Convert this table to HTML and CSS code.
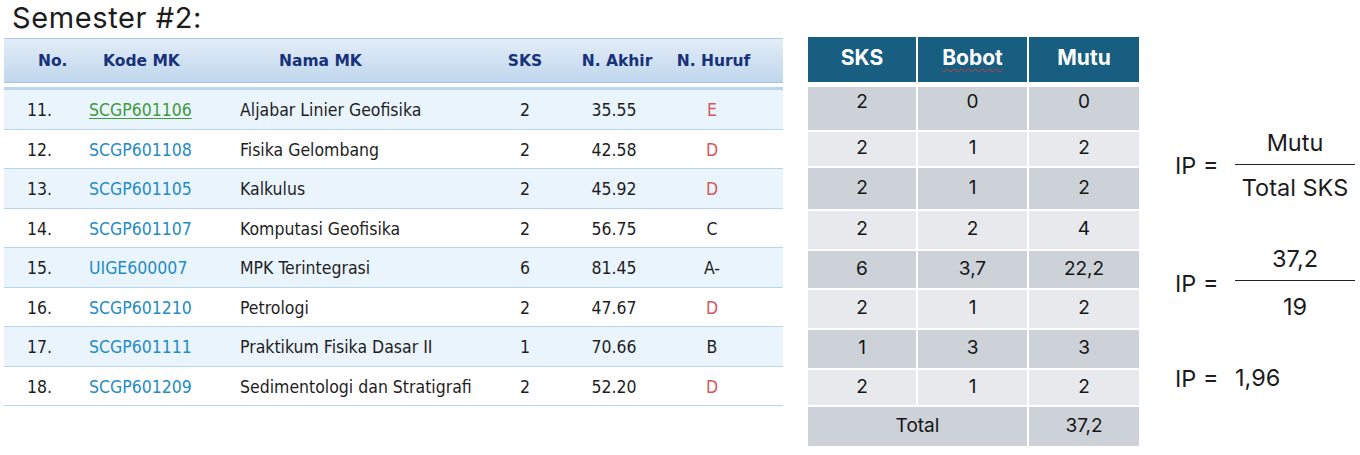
FILE: index.html
```html
<!DOCTYPE html>
<html lang="id">
<head>
<meta charset="utf-8">
<title>Semester #2</title>
<link rel="stylesheet" href="styles.css">
</head>
<body>
<div class="title">Semester #2:</div>
<div class="main">
  <table class="grades">
    <colgroup>
      <col class="w-no"><col class="w-kode"><col class="w-nama"><col class="w-sks"><col class="w-akhir"><col class="w-huruf">
    </colgroup>
    <thead>
      <tr>
        <th class="h-no">No.</th>
        <th class="h-kode">Kode MK</th>
        <th class="h-nama">Nama MK</th>
        <th class="h-center">SKS</th>
        <th class="h-center h-akhir">N. Akhir</th>
        <th class="h-huruf">N. Huruf</th>
      </tr>
    </thead>
    <tbody>
      <tr class="spacer"><td colspan="6"></td></tr>
      <tr class="alt first">
        <td class="d-no">11.</td><td class="d-kode"><a class="visited">SCGP601106</a></td><td class="d-nama">Aljabar Linier Geofisika</td><td class="d-center">2</td><td class="d-center">35.55</td><td class="d-huruf bad">E</td>
      </tr>
      <tr>
        <td class="d-no">12.</td><td class="d-kode"><a>SCGP601108</a></td><td class="d-nama">Fisika Gelombang</td><td class="d-center">2</td><td class="d-center">42.58</td><td class="d-huruf bad">D</td>
      </tr>
      <tr class="alt">
        <td class="d-no">13.</td><td class="d-kode"><a>SCGP601105</a></td><td class="d-nama">Kalkulus</td><td class="d-center">2</td><td class="d-center">45.92</td><td class="d-huruf bad">D</td>
      </tr>
      <tr>
        <td class="d-no">14.</td><td class="d-kode"><a>SCGP601107</a></td><td class="d-nama">Komputasi Geofisika</td><td class="d-center">2</td><td class="d-center">56.75</td><td class="d-huruf">C</td>
      </tr>
      <tr class="alt">
        <td class="d-no">15.</td><td class="d-kode"><a>UIGE600007</a></td><td class="d-nama">MPK Terintegrasi</td><td class="d-center">6</td><td class="d-center">81.45</td><td class="d-huruf">A-</td>
      </tr>
      <tr>
        <td class="d-no">16.</td><td class="d-kode"><a>SCGP601210</a></td><td class="d-nama">Petrologi</td><td class="d-center">2</td><td class="d-center">47.67</td><td class="d-huruf bad">D</td>
      </tr>
      <tr class="alt">
        <td class="d-no">17.</td><td class="d-kode"><a>SCGP601111</a></td><td class="d-nama">Praktikum Fisika Dasar II</td><td class="d-center">1</td><td class="d-center">70.66</td><td class="d-huruf">B</td>
      </tr>
      <tr>
        <td class="d-no">18.</td><td class="d-kode"><a>SCGP601209</a></td><td class="d-nama">Sedimentologi dan Stratigrafi</td><td class="d-center">2</td><td class="d-center">52.20</td><td class="d-huruf bad">D</td>
      </tr>
    </tbody>
  </table>

  <div class="bobot">
    <div class="bh">SKS</div><div class="bh"><span class="spell">Bobot</span></div><div class="bh">Mutu</div>
    <div class="bc dark top">2</div><div class="bc dark top">0</div><div class="bc dark top">0</div>
    <div class="bc light">2</div><div class="bc light">1</div><div class="bc light">2</div>
    <div class="bc dark">2</div><div class="bc dark">1</div><div class="bc dark">2</div>
    <div class="bc light">2</div><div class="bc light">2</div><div class="bc light">4</div>
    <div class="bc dark">6</div><div class="bc dark">3,7</div><div class="bc dark">22,2</div>
    <div class="bc light">2</div><div class="bc light">1</div><div class="bc light">2</div>
    <div class="bc dark">1</div><div class="bc dark">3</div><div class="bc dark">3</div>
    <div class="bc light">2</div><div class="bc light">1</div><div class="bc light">2</div>
    <div class="bc dark span2">Total</div><div class="bc dark">37,2</div>
  </div>

  <div class="formulas">
    <div class="formula">
      <span class="ip">IP =</span>
      <span class="frac"><span class="num">Mutu</span><span class="den">Total SKS</span></span>
    </div>
    <div class="formula f2">
      <span class="ip">IP =</span>
      <span class="frac"><span class="num">37,2</span><span class="den">19</span></span>
    </div>
    <div class="formula f3">
      <span class="ip">IP =</span>
      <span class="val">1,96</span>
    </div>
  </div>
</div>
</body>
</html>
```

FILE: styles.css
```css
html, body {
  margin: 0;
  padding: 0;
  background: #ffffff;
}
body {
  width: 1360px;
  height: 455px;
  overflow: hidden;
  font-family: "Inter", "Liberation Sans", sans-serif;
  color: #1a1a1a;
}
.title {
  height: 37px;
  line-height: 35px;
  padding-left: 12px;
  font-size: 29px;
  letter-spacing: 0.6px;
  color: #1c1c1c;
}
.main {
  display: flex;
  align-items: flex-start;
}

/* ---- grades table ---- */
.grades {
  margin-left: 4px;
  margin-top: 1px;
  width: 779px;
  table-layout: fixed;
  border-collapse: separate;
  border-spacing: 0;
  font-family: "DejaVu Sans Condensed", "DejaVu Sans", sans-serif;
  font-stretch: condensed;
  font-size: 17.5px;
}
.w-no { width: 72px; }
.w-kode { width: 152px; }
.w-nama { width: 262px; }
.w-sks { width: 70px; }
.w-akhir { width: 108px; }
.w-huruf { width: 115px; }

.grades thead th {
  height: 43px;
  padding: 0;
  border-top: 1px solid #a9cbea;
  border-bottom: 1px solid #a7c6e4;
  background: linear-gradient(#e2edf8, #c0d6ec);
  font-family: "DejaVu Sans", sans-serif;
  font-stretch: normal;
  font-weight: 700;
  font-size: 15.5px;
  color: #17327a;
  text-align: left;
  white-space: nowrap;
}
.h-no { padding-left: 34px !important; }
.h-kode { padding-left: 27px !important; }
.h-nama { padding-left: 51px !important; }
.h-center { text-align: center !important; }
.h-akhir { padding-left: 6px !important; }
.h-huruf { text-align: center !important; padding-right: 24px !important; }

.spacer td {
  height: 4px;
  padding: 0;
}
.grades tbody tr.first td {
  border-top: 3px solid #bcd6ee;
}
.grades tbody td {
  height: 36.5px;
  padding: 2px 0 0 0;
  border-bottom: 1px solid #b8d4ee;
  color: #1e1e1e;
  white-space: nowrap;
}
.grades tbody .spacer td {
  border-bottom: 0;
  height: 4px;
  padding: 0;
}
.grades tbody tr.alt td {
  background: #eaf4fd;
}
.d-no { padding-left: 23px !important; }
.d-kode { padding-left: 13px !important; }
.d-nama { padding-left: 12px !important; }
.d-center { text-align: center; }
.d-huruf { text-align: center; padding-right: 27px !important; }
.d-kode a {
  color: #1f8cc4;
  text-decoration: none;
}
.d-kode a.visited {
  color: #3f9a3a;
  text-decoration: underline;
  text-underline-offset: 2px;
}
.bad { color: #d2585a !important; }

/* ---- bobot table ---- */
.bobot {
  margin-left: 25px;
  display: grid;
  grid-template-columns: 108px 109px 110px;
  grid-template-rows: 48px 43px 34px 41px 38px 37px 38px 38px 35px 39px;
  column-gap: 2px;
  row-gap: 2px;
  font-size: 19px;
  color: #151515;
}
.bh {
  height: 45px;
  background: #175e81;
  color: #ffffff;
  font-weight: 700;
  font-size: 21px;
  display: flex;
  align-items: center;
  justify-content: center;
  padding-bottom: 5px;
  box-sizing: border-box;
}
.spell {
  text-decoration: underline wavy #d23a3a;
  text-decoration-thickness: 1px;
  text-underline-offset: 3px;
}
.bc {
  display: flex;
  align-items: center;
  justify-content: center;
  padding-bottom: 3px;
  box-sizing: border-box;
}
.bc.top {
  align-items: flex-start;
  padding-top: 3px;
}
.dark { background: #cdd1d8; }
.light { background: #e8e9ec; }
.span2 { grid-column: span 2; }

/* ---- formulas ---- */
.formulas {
  margin-left: 36px;
  padding-top: 91px;
  display: flex;
  flex-direction: column;
  font-size: 23.5px;
  color: #1c1c1c;
}
.formula {
  display: flex;
  align-items: center;
}
.f2 { margin-top: 41px; }
.f3 { margin-top: 41px; height: 30px; }
.ip {
  width: 60px;
  flex: none;
}
.frac {
  display: flex;
  flex-direction: column;
  align-items: center;
  width: 120px;
}
.num {
  height: 30px;
  line-height: 30px;
  width: 100%;
  text-align: center;
  padding-bottom: 6px;
  border-bottom: 1.5px solid #222222;
}
.den {
  height: 30px;
  line-height: 30px;
  padding-top: 8px;
  text-align: center;
}
.f2 .den {
  padding-top: 11px;
}
.val {
  line-height: 30px;
}
```
